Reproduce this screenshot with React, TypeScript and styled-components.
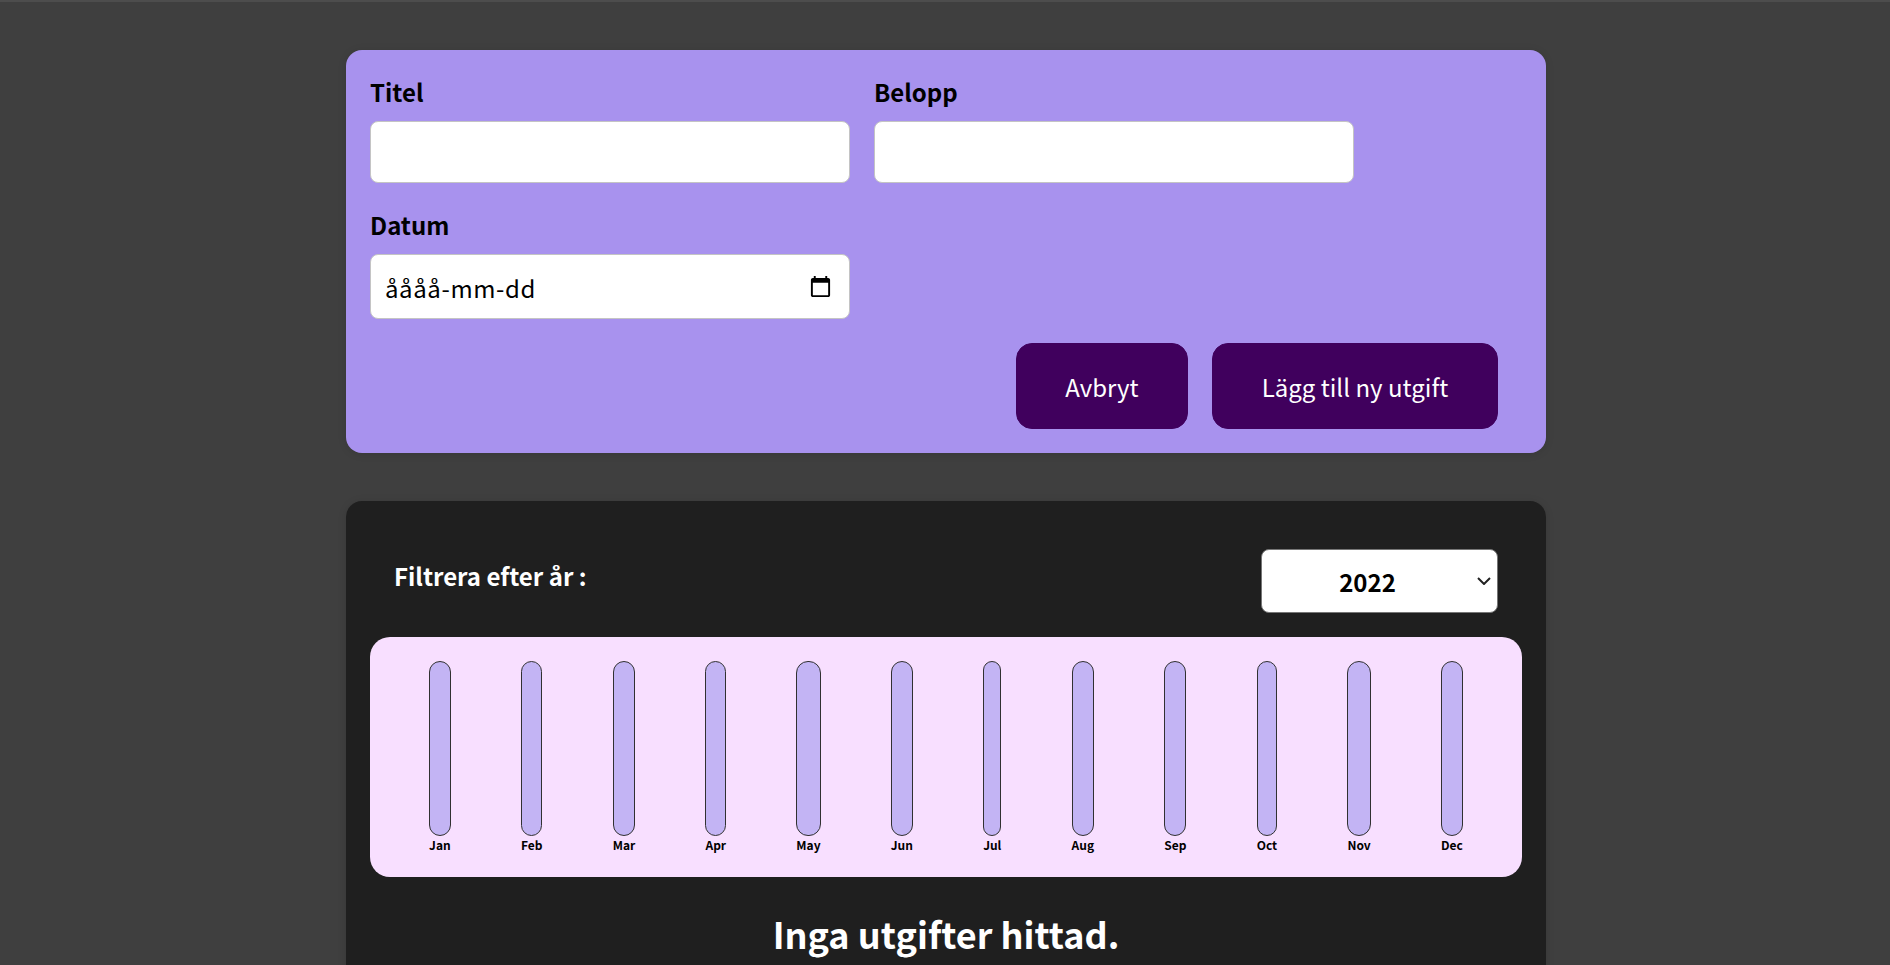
import * as React from "react"
import styled, { createGlobalStyle } from "styled-components"

const months: string[] = ["Jan", "Feb", "Mar", "Apr", "May", "Jun", "Jul", "Aug", "Sep", "Oct", "Nov", "Dec"]

const GlobalStyle = createGlobalStyle`
  * {
    box-sizing: border-box;
  }

  html {
    font-family: "Noto Sans CJK JP", "Noto Sans", sans-serif;
  }

  body {
    margin: 0;
    padding-left: 2px;
    background: #3f3f3f;
    border-top: 2px solid #4d4d4d;
  }
`

export default function App(): React.ReactElement {
  return (
    <>
      <GlobalStyle />
      <Page>
        <FormCard>
          <Controls>
            <Control>
              <Label htmlFor="title">Titel</Label>
              <TextInput id="title" type="text" />
            </Control>
            <Control>
              <Label htmlFor="amount">Belopp</Label>
              <TextInput id="amount" type="text" />
            </Control>
            <Control>
              <Label htmlFor="date">Datum</Label>
              <DateField>
                <DateInput id="date" type="text" placeholder="åååå-mm-dd" />
                <CalendarIcon viewBox="0 0 24 24" aria-hidden="true">
                  <path d="M20 3h-1V1h-2v2H7V1H5v2H4c-1.1 0-2 .9-2 2v16c0 1.1.9 2 2 2h16c1.1 0 2-.9 2-2V5c0-1.1-.9-2-2-2zm0 18H4V8h16v13z" />
                </CalendarIcon>
              </DateField>
            </Control>
          </Controls>
          <Actions>
            <CancelButton type="button">Avbryt</CancelButton>
            <SubmitButton type="submit">Lägg till ny utgift</SubmitButton>
          </Actions>
        </FormCard>

        <ExpensesCard>
          <FilterRow>
            <FilterLabel htmlFor="year">Filtrera efter år :</FilterLabel>
            <SelectWrap>
              <YearSelect id="year" defaultValue="2022">
                <option value="2022">2022</option>
                <option value="2021">2021</option>
                <option value="2020">2020</option>
              </YearSelect>
              <SelectArrow viewBox="0 0 14 8" aria-hidden="true">
                <path d="M1 1l6 6 6-6" />
              </SelectArrow>
            </SelectWrap>
          </FilterRow>
          <Chart>
            {months.map(month => (
              <ChartColumn key={month}>
                <ChartBar />
                <ChartLabel>{month}</ChartLabel>
              </ChartColumn>
            ))}
          </Chart>
          <EmptyMessage>Inga utgifter hittad.</EmptyMessage>
        </ExpensesCard>
      </Page>
    </>
  )
}

const Page = styled.main`
  width: 1200px;
  margin: 48px auto 0;
`

const FormCard = styled.form`
  background: #a892ee;
  border-radius: 16px;
  padding: 24px;
  box-shadow: 0 1px 8px rgba(0, 0, 0, 0.12);
`

const Controls = styled.div`
  display: flex;
  flex-wrap: wrap;
  gap: 24px;
  margin-bottom: 24px;
`

const Control = styled.div`
  width: 480px;
`

const Label = styled.label`
  display: block;
  font-size: 24px;
  font-weight: 700;
  line-height: 35px;
  margin-bottom: 12px;
  color: #000;
`

const TextInput = styled.input`
  display: block;
  width: 100%;
  height: 62px;
  padding: 8px;
  border: 1px solid #c4c4c4;
  border-radius: 8px;
  background: #fff;
  font: inherit;
  font-size: 24px;
`

const DateField = styled.div`
  display: flex;
  align-items: center;
  height: 65px;
  padding: 0 17px 0 14px;
  border: 1px solid #c4c4c4;
  border-radius: 8px;
  background: #fff;
`

const DateInput = styled.input`
  flex: 1;
  min-width: 0;
  border: 0;
  outline: 0;
  padding: 2px 0 0;
  background: transparent;
  font: inherit;
  font-size: 24px;
  letter-spacing: 0.6px;

  &::placeholder {
    color: #000;
    opacity: 1;
  }
`

const CalendarIcon = styled.svg`
  width: 23px;
  height: 23px;
  fill: #000;
`

const Actions = styled.div`
  display: flex;
  justify-content: flex-end;
  gap: 24px;
  padding-right: 24px;
`

const ActionButton = styled.button`
  padding: 25px 0 23px;
  border: 1px solid #40005d;
  border-radius: 16px;
  background: #40005d;
  color: #fff;
  font: inherit;
  font-size: 24px;
  line-height: 36px;
  cursor: pointer;
`

const CancelButton = styled(ActionButton)`
  width: 172px;
`

const SubmitButton = styled(ActionButton)`
  width: 286px;
`

const ExpensesCard = styled.section`
  margin-top: 48px;
  padding: 24px;
  background: #1f1f1f;
  border-radius: 16px;
  box-shadow: 0 1px 8px rgba(0, 0, 0, 0.12);
`

const FilterRow = styled.div`
  display: flex;
  align-items: center;
  justify-content: space-between;
  padding: 24px;
`

const FilterLabel = styled.label`
  margin-bottom: 12px;
  color: #fff;
  font-size: 24px;
  font-weight: 700;
`

const SelectWrap = styled.div`
  position: relative;
  width: 237px;
  height: 64px;
`

const YearSelect = styled.select`
  appearance: none;
  display: block;
  width: 100%;
  height: 100%;
  padding: 0 24px 0 0;
  border: 1px solid #767676;
  border-radius: 8px;
  background: #fff;
  color: #000;
  font: inherit;
  font-size: 24px;
  font-weight: 700;
  text-align: center;
`

const SelectArrow = styled.svg`
  position: absolute;
  top: 28px;
  right: 7px;
  width: 14px;
  height: 8px;
  fill: none;
  stroke: #222;
  stroke-width: 2px;
  pointer-events: none;
`

const Chart = styled.div`
  display: flex;
  justify-content: space-around;
  height: 240px;
  padding: 24px;
  background: #f8dfff;
  border-radius: 20px;
`

const ChartColumn = styled.div`
  display: flex;
  flex-direction: column;
  align-items: stretch;
`

const ChartBar = styled.div`
  flex: 1;
  border: 1px solid #313131;
  border-radius: 12px;
  background: #c3b4f4;
`

const ChartLabel = styled.div`
  font-size: 12px;
  font-weight: 700;
  line-height: 17px;
  text-align: center;
  color: #000;
`

const EmptyMessage = styled.h2`
  margin: 30px 0 24px;
  text-align: center;
  color: #fff;
  font-size: 36px;
  font-weight: 700;
`
